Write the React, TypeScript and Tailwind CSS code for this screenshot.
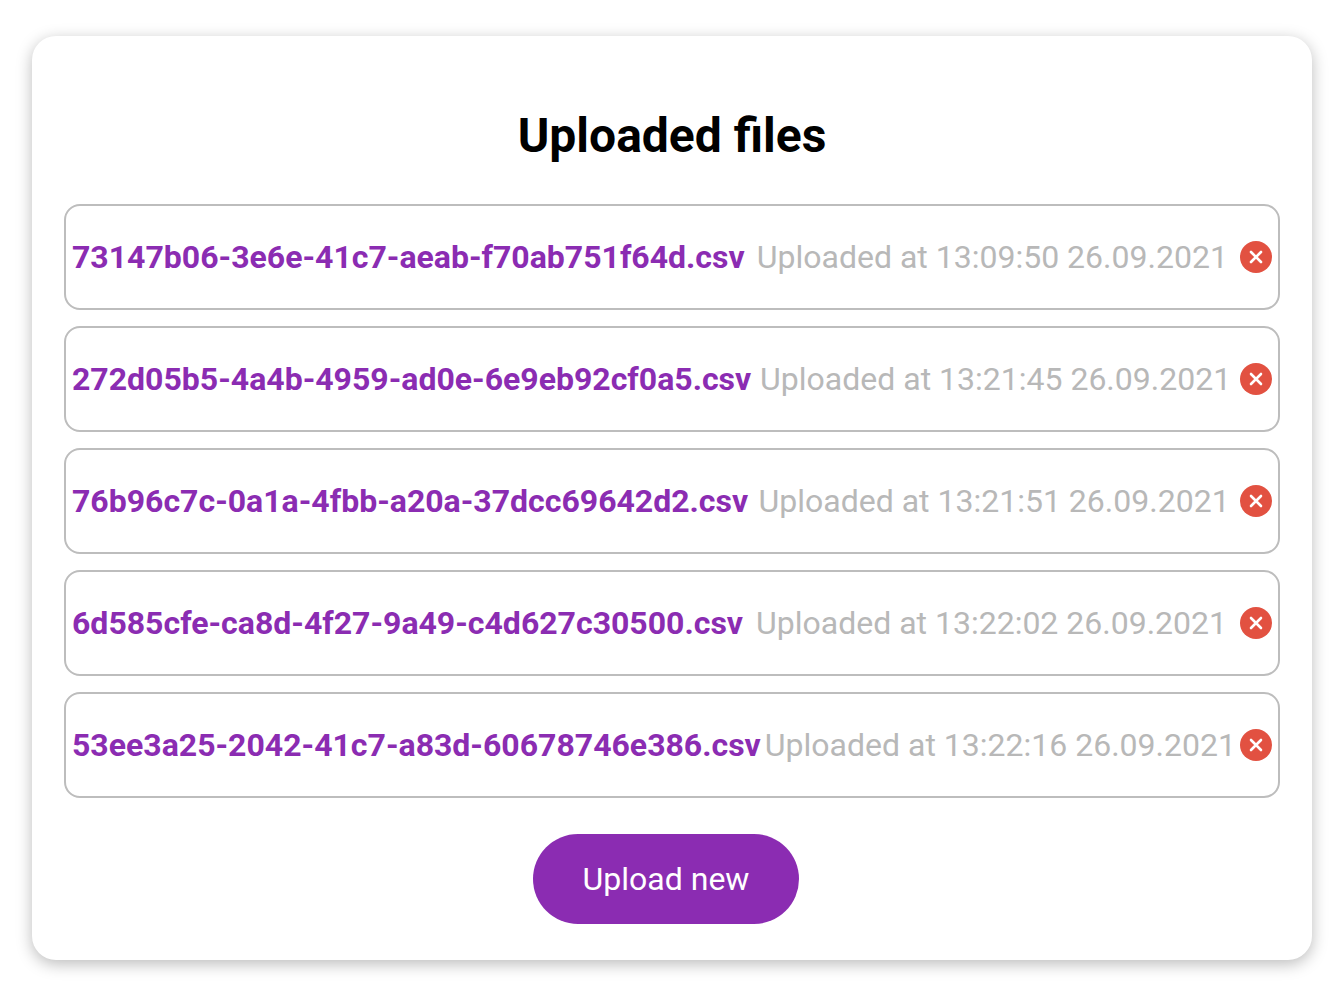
const files = [
  { name: "73147b06-3e6e-41c7-aeab-f70ab751f64d.csv", at: "13:09:50 26.09.2021" },
  { name: "272d05b5-4a4b-4959-ad0e-6e9eb92cf0a5.csv", at: "13:21:45 26.09.2021" },
  { name: "76b96c7c-0a1a-4fbb-a20a-37dcc69642d2.csv", at: "13:21:51 26.09.2021" },
  { name: "6d585cfe-ca8d-4f27-9a49-c4d627c30500.csv", at: "13:22:02 26.09.2021" },
  { name: "53ee3a25-2042-41c7-a83d-60678746e386.csv", at: "13:22:16 26.09.2021" },
];

function DeleteIcon() {
  return (
    <svg viewBox="0 0 32 32" className="block size-8" aria-hidden="true">
      <circle cx="16" cy="16" r="16" fill="#e25141" />
      <path d="M11 11l10 10M21 11L11 21" stroke="#fff" strokeWidth="2.6" strokeLinecap="round" fill="none" />
    </svg>
  );
}

export default function App() {
  return (
    <div className="min-h-screen bg-white pt-9 pr-7 pb-9 pl-8 font-[Roboto,sans-serif] text-[32px] leading-10">
      <main className="flex flex-col items-center rounded-3xl bg-white px-8 pt-17 pb-9 shadow-[0_4px_16px_rgba(0,0,0,0.27)]">
        <h1 className="text-5xl leading-16 font-bold text-black">Uploaded files</h1>
        <ul className="mt-9 flex w-full flex-col gap-4">
          {files.map((file) => (
            <li
              key={file.name}
              className="flex h-[106px] items-center justify-between rounded-2xl border-2 border-[#bdbdbd] px-1.5 whitespace-nowrap"
            >
              <a href="#" className="font-bold text-[#8b2cb2]">{file.name}</a>
              <span className="text-[#b8b8b8]">Uploaded at {file.at}</span>
              <button type="button" aria-label={`Delete ${file.name}`} className="rounded-full">
                <DeleteIcon />
              </button>
            </li>
          ))}
        </ul>
        <button type="button" className="mt-9 mr-3 h-[90px] rounded-full bg-[#8b2cb2] px-[50px] text-white">
          Upload new
        </button>
      </main>
    </div>
  );
}
